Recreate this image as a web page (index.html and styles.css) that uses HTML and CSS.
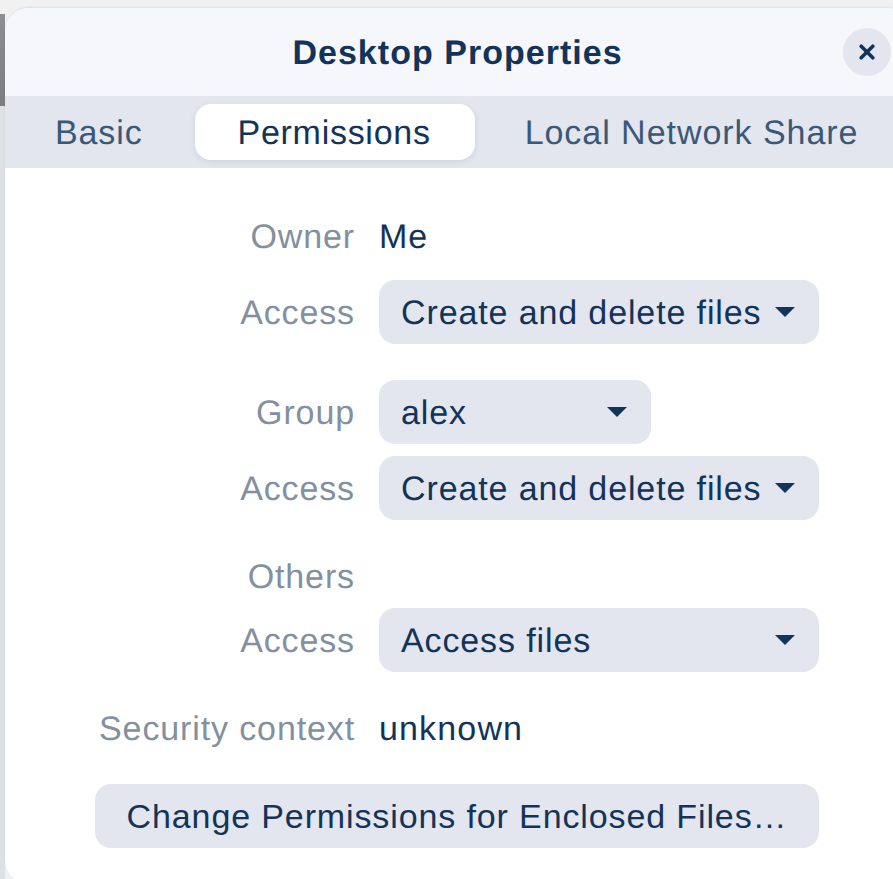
FILE: index.html
```html
<!DOCTYPE html>
<html lang="en">
<head>
<meta charset="utf-8">
<title>Desktop Properties</title>
<link rel="stylesheet" href="styles.css">
</head>
<body>
<div class="backdrop"></div>
<div class="window">
  <header class="titlebar">
    <span></span>
    <h1 class="title">Desktop Properties</h1>
    <button class="close" aria-label="Close">
      <svg viewBox="0 0 16 16" width="16" height="16"><path d="M2.2 2.2 13.8 13.8M13.8 2.2 2.2 13.8" fill="none" stroke="#12345a" stroke-width="3.6" stroke-linecap="round"/></svg>
    </button>
  </header>
  <nav class="tabs">
    <div class="tab tab-basic">Basic</div>
    <div class="tab tab-active">Permissions</div>
    <div class="tab tab-share">Local Network Share</div>
  </nav>
  <main class="content">
    <section class="grid">
      <div class="label tall">Owner</div><div class="value tall">Me</div>
      <div class="label">Access</div>
      <div class="select"><span>Create and delete files</span><svg class="caret" viewBox="0 0 20 10" width="20" height="10"><path d="M0 0H20L10 10Z"/></svg></div>
    </section>
    <section class="grid">
      <div class="label">Group</div>
      <div class="select select-short"><span>alex</span><svg class="caret" viewBox="0 0 20 10" width="20" height="10"><path d="M0 0H20L10 10Z"/></svg></div>
      <div class="label">Access</div>
      <div class="select"><span>Create and delete files</span><svg class="caret" viewBox="0 0 20 10" width="20" height="10"><path d="M0 0H20L10 10Z"/></svg></div>
    </section>
    <section class="grid">
      <div class="label short">Others</div><div class="value short"></div>
      <div class="label">Access</div>
      <div class="select"><span>Access files</span><svg class="caret" viewBox="0 0 20 10" width="20" height="10"><path d="M0 0H20L10 10Z"/></svg></div>
    </section>
    <section class="grid">
      <div class="label short">Security context</div><div class="value short value-wide">unknown</div>
    </section>
    <div class="action"><button class="wide-button">Change Permissions for Enclosed Files…</button></div>
  </main>
</div>
</body>
</html>
```
FILE: styles.css
```css
* { box-sizing: border-box; }
html, body { margin: 0; height: 879px; overflow: hidden; }
body {
  background: #f1f1f2;
  font-family: "Liberation Sans", Arial, sans-serif;
  font-size: 34px;
  letter-spacing: 0.88px;
  text-rendering: geometricPrecision;
  color: #12345a;
  padding: 8px 0 0 5px;
  position: relative;
}
.backdrop {
  position: absolute;
  left: 0; top: 14px; bottom: 0;
  width: 5px;
  background: linear-gradient(#8c8e90 0, #7b7d80 92px, #dde1e4 92px, #dde1e4 100%);
}
.window {
  position: relative;
  width: 905px;
  border-radius: 24px;
  overflow: hidden;
  background: #fff;
  box-shadow: 0 -1px 2px rgba(0,0,0,.08);
}
.titlebar {
  height: 88px;
  background: #f6f7fb;
  display: grid;
  grid-template-columns: 1fr auto 1fr;
  align-items: center;
  padding: 0 19px;
}
.title { margin: 0; padding-top: 2px; font-size: 34px; font-weight: 700; letter-spacing: 1.02px; }
.close {
  justify-self: end;
  width: 48px; height: 48px;
  padding: 0; border: 0; border-radius: 50%;
  background: #e3e6ee;
  display: flex; align-items: center; justify-content: center;
}
.tabs {
  height: 72px;
  background: #e3e6ee;
  display: flex;
  align-items: center;
  padding: 0 8px;
}
.tab { height: 56px; line-height: 58px; padding: 0 42px; border-radius: 16px; color: #3a5878; white-space: nowrap; }
.tab-basic { margin-right: 10px; }
.tab-active { background: #fff; color: #12345a; letter-spacing: 0.72px; padding: 0 44px 0 43px; margin-right: 8px; box-shadow: 0 2px 6px rgba(30,50,90,.1); }
.tab-share { letter-spacing: 0.96px; }
.content { padding: 36px 0 36px; display: flex; flex-direction: column; gap: 36px; }
.grid {
  display: grid;
  grid-template-columns: 350px 440px;
  column-gap: 24px;
  row-gap: 12px;
  align-items: center;
}
.label { text-align: right; color: #82909f; white-space: nowrap; padding-top: 2px; }
.tall { height: 64px; line-height: 64px; padding-top: 1px; }
.short { height: 40px; line-height: 40px; padding-top: 1px; }
.value { color: #12345a; }
.value-wide { letter-spacing: 1.15px; }
.select {
  height: 64px;
  border-radius: 16px;
  background: #e3e6ee;
  padding: 0 24px 0 22px;
  display: flex;
  align-items: center;
  justify-content: space-between;
}
.select span { padding-top: 2px; }
.select-short { width: 272px; }
.caret { fill: #12345a; flex: none; }
.action { padding-left: 90px; }
.wide-button {
  width: 724px; height: 64px;
  border: 0; border-radius: 16px;
  background: #e3e6ee;
  color: #12345a;
  font: inherit;
  letter-spacing: inherit;
  padding: 0;
}
```
